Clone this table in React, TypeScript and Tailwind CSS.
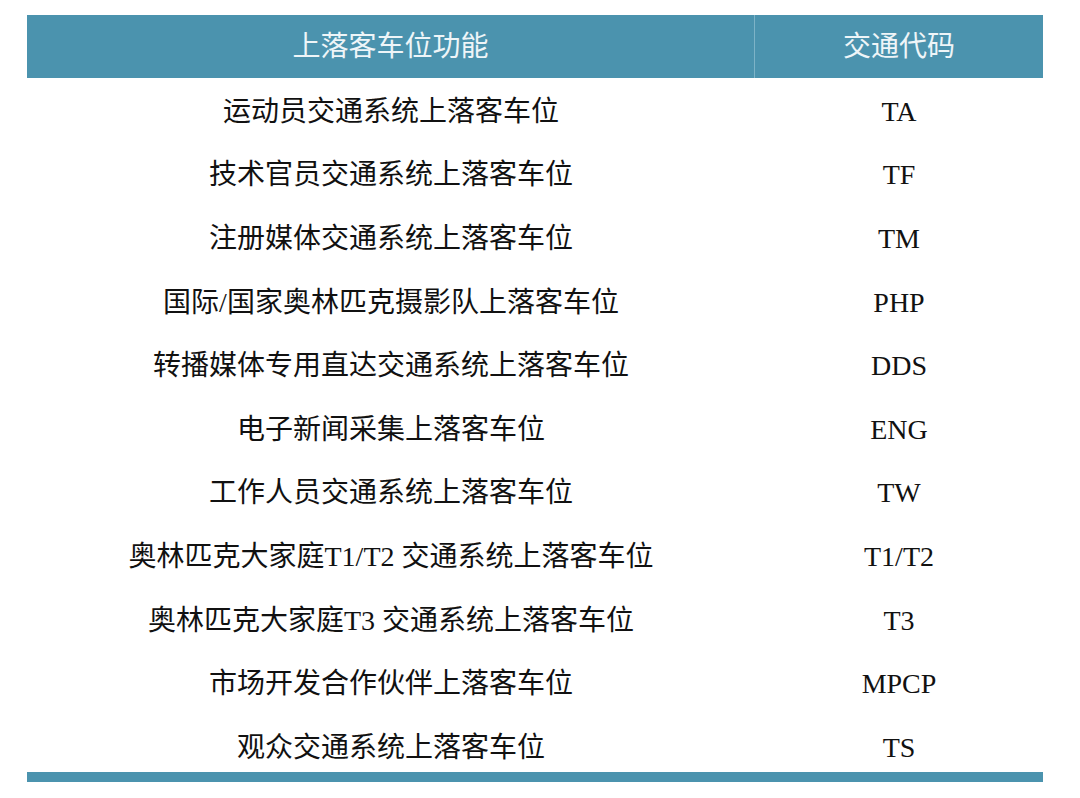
const rows: [string, string][] = [
  ["运动员交通系统上落客车位", "TA"],
  ["技术官员交通系统上落客车位", "TF"],
  ["注册媒体交通系统上落客车位", "TM"],
  ["国际/国家奥林匹克摄影队上落客车位", "PHP"],
  ["转播媒体专用直达交通系统上落客车位", "DDS"],
  ["电子新闻采集上落客车位", "ENG"],
  ["工作人员交通系统上落客车位", "TW"],
  ["奥林匹克大家庭T1/T2 交通系统上落客车位", "T1/T2"],
  ["奥林匹克大家庭T3 交通系统上落客车位", "T3"],
  ["市场开发合作伙伴上落客车位", "MPCP"],
  ["观众交通系统上落客车位", "TS"],
];

export default function App() {
  return (
    <div className="w-[1080px] h-[798px] bg-white pt-[15px] pl-[27px] font-['Liberation_Serif','Noto_Sans_CJK_SC',serif] text-[#111]">
      <div className="w-[1016px]">
        {/* header */}
        <div className="flex h-[63px] bg-[#4b93ae] text-[28px] text-[#eef5f8]">
          <div className="w-[728px] flex items-center justify-center border-r border-[#7db3c7]">上落客车位功能</div>
          <div className="flex-1 flex items-center justify-center">交通代码</div>
        </div>

        {/* body */}
        <div className="flex flex-col">
          {rows.map(([name, code], i) => (
            <div
              key={code}
              className={`flex items-center text-[28px] ${i === rows.length - 1 ? "h-[58px] pt-[10px]" : "h-[63.6px] pt-[4px]"}`}
            >
              <div className="w-[728px] text-center whitespace-pre">{name}</div>
              <div className="flex-1 text-center">{code}</div>
            </div>
          ))}
        </div>

        <div className="h-[10px] bg-[#4b93ae]" />
      </div>
    </div>
  );
}
